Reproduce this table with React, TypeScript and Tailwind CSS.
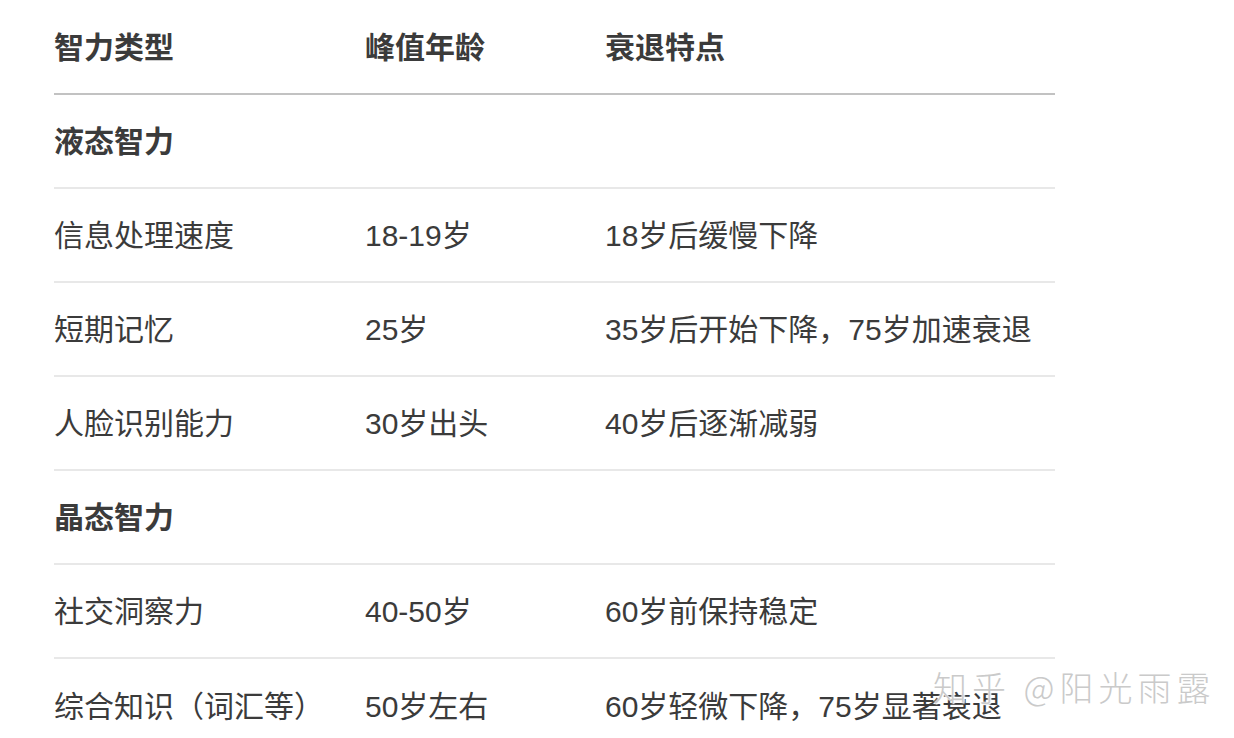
import React from "react";

type Row = { name: string; peak?: string; decline?: string; group?: boolean };

const rows: Row[] = [
  { name: "液态智力", group: true },
  { name: "信息处理速度", peak: "18-19岁", decline: "18岁后缓慢下降" },
  { name: "短期记忆", peak: "25岁", decline: "35岁后开始下降，75岁加速衰退" },
  { name: "人脸识别能力", peak: "30岁出头", decline: "40岁后逐渐减弱" },
  { name: "晶态智力", group: true },
  { name: "社交洞察力", peak: "40-50岁", decline: "60岁前保持稳定" },
  { name: "综合知识（词汇等）", peak: "50岁左右", decline: "60岁轻微下降，75岁显著衰退" },
];

const font = { fontFamily: '"Liberation Sans", "Noto Sans CJK SC", sans-serif' };

export default function App() {
  return (
    <div className="relative h-[738px] w-[1234px] overflow-hidden bg-white text-[#3b3b3b]" style={font}>
      <div className="ml-[54px] w-[1001px] text-[30px]">
        <div className="grid h-[95px] grid-cols-[311px_240px_450px] items-center border-b-2 border-[#c2c2c2] pt-[1px] font-bold">
          <div>智力类型</div>
          <div>峰值年龄</div>
          <div>衰退特点</div>
        </div>
        {rows.map((row, i) => (
          <div
            key={row.name}
            className={
              "grid h-[94px] grid-cols-[311px_240px_450px] items-center pt-[1px] " +
              (i < rows.length - 1 ? "border-b-2 border-[#e8e8e8]" : "")
            }
          >
            <div className={row.group ? "font-bold" : ""}>{row.name}</div>
            <div>{row.peak}</div>
            <div>{row.decline}</div>
          </div>
        ))}
      </div>

      {/* watermark */}
      <div
        className="absolute left-[933px] top-[661px] text-[34px] tracking-[5px] text-[#cacaca]"
        style={{ fontFamily: '"Noto Sans CJK SC", sans-serif', fontWeight: 300, textShadow: "0 0 2px #fff, 0 0 2px #fff, 1px 1px 1px #fff" }}
      >
        知乎 @阳光雨露
      </div>
    </div>
  );
}
